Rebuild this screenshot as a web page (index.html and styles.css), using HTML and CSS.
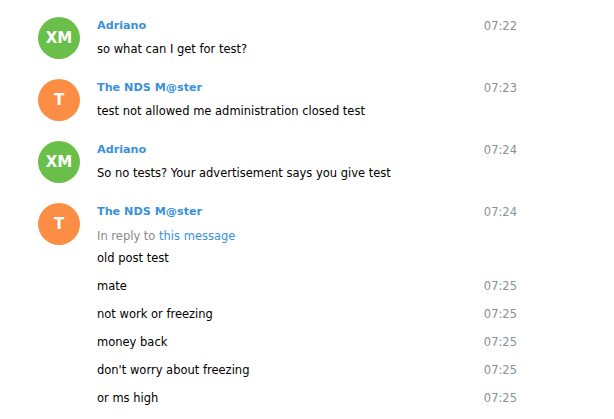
FILE: index.html
```html
<!DOCTYPE html>
<html>
<head>
<meta charset="utf-8">
<link rel="stylesheet" href="styles.css">
</head>
<body>
<div class="chat">
  <div class="group">
    <div class="avatar green">XM</div>
    <div class="content">
      <div class="head"><span class="name">Adriano</span><span class="time">07:22</span></div>
      <div class="msg"><span class="text">so what can I get for test?</span></div>
    </div>
  </div>
  <div class="group">
    <div class="avatar orange">T</div>
    <div class="content">
      <div class="head"><span class="name">The NDS M@ster</span><span class="time">07:23</span></div>
      <div class="msg"><span class="text">test not allowed me administration closed test</span></div>
    </div>
  </div>
  <div class="group">
    <div class="avatar green">XM</div>
    <div class="content">
      <div class="head"><span class="name">Adriano</span><span class="time">07:24</span></div>
      <div class="msg"><span class="text">So no tests? Your advertisement says you give test</span></div>
    </div>
  </div>
  <div class="group">
    <div class="avatar orange">T</div>
    <div class="content">
      <div class="head"><span class="name">The NDS M@ster</span><span class="time">07:24</span></div>
      <div class="reply">In reply to <span class="link">this message</span></div>
      <div class="msg"><span class="text">old post test</span></div>
      <div class="msg"><span class="text">mate</span><span class="time">07:25</span></div>
      <div class="msg"><span class="text">not work or freezing</span><span class="time">07:25</span></div>
      <div class="msg"><span class="text">money back</span><span class="time">07:25</span></div>
      <div class="msg"><span class="text">don't worry about freezing</span><span class="time">07:25</span></div>
      <div class="msg"><span class="text">or ms high</span><span class="time">07:25</span></div>
    </div>
  </div>
</div>
</body>
</html>
```

FILE: styles.css
```css
html, body {
  margin: 0;
  padding: 0;
  background: #ffffff;
}
body {
  font-family: "DejaVu Sans", "Liberation Sans", sans-serif;
  font-size: 11.5px;
  color: #000000;
}
.chat {
  width: 614px;
  padding-top: 2px;
}
.group {
  display: flex;
  align-items: flex-start;
  padding: 15px 97px 1px 38px;
}
.avatar {
  flex: none;
  width: 42px;
  height: 42px;
  border-radius: 50%;
  color: #ffffff;
  font-size: 15px;
  font-weight: bold;
  display: flex;
  align-items: center;
  justify-content: center;
}
.avatar.green { background: #6abf4b; }
.avatar.orange { background: #fc8d45; }
.content {
  flex: 1;
  margin-left: 17px;
}
.head, .msg {
  display: flex;
  justify-content: space-between;
  line-height: 18px;
}
.msg {
  padding: 5px 0;
}
.name {
  color: #3a91d9;
  font-weight: bold;
  font-size: 11.2px;
}
.time {
  color: #8a9095;
}
.reply {
  margin-top: 6px;
  margin-bottom: -1px;
  line-height: 18px;
  color: #8a8a8a;
}
.link {
  color: #3a91d9;
}
```
